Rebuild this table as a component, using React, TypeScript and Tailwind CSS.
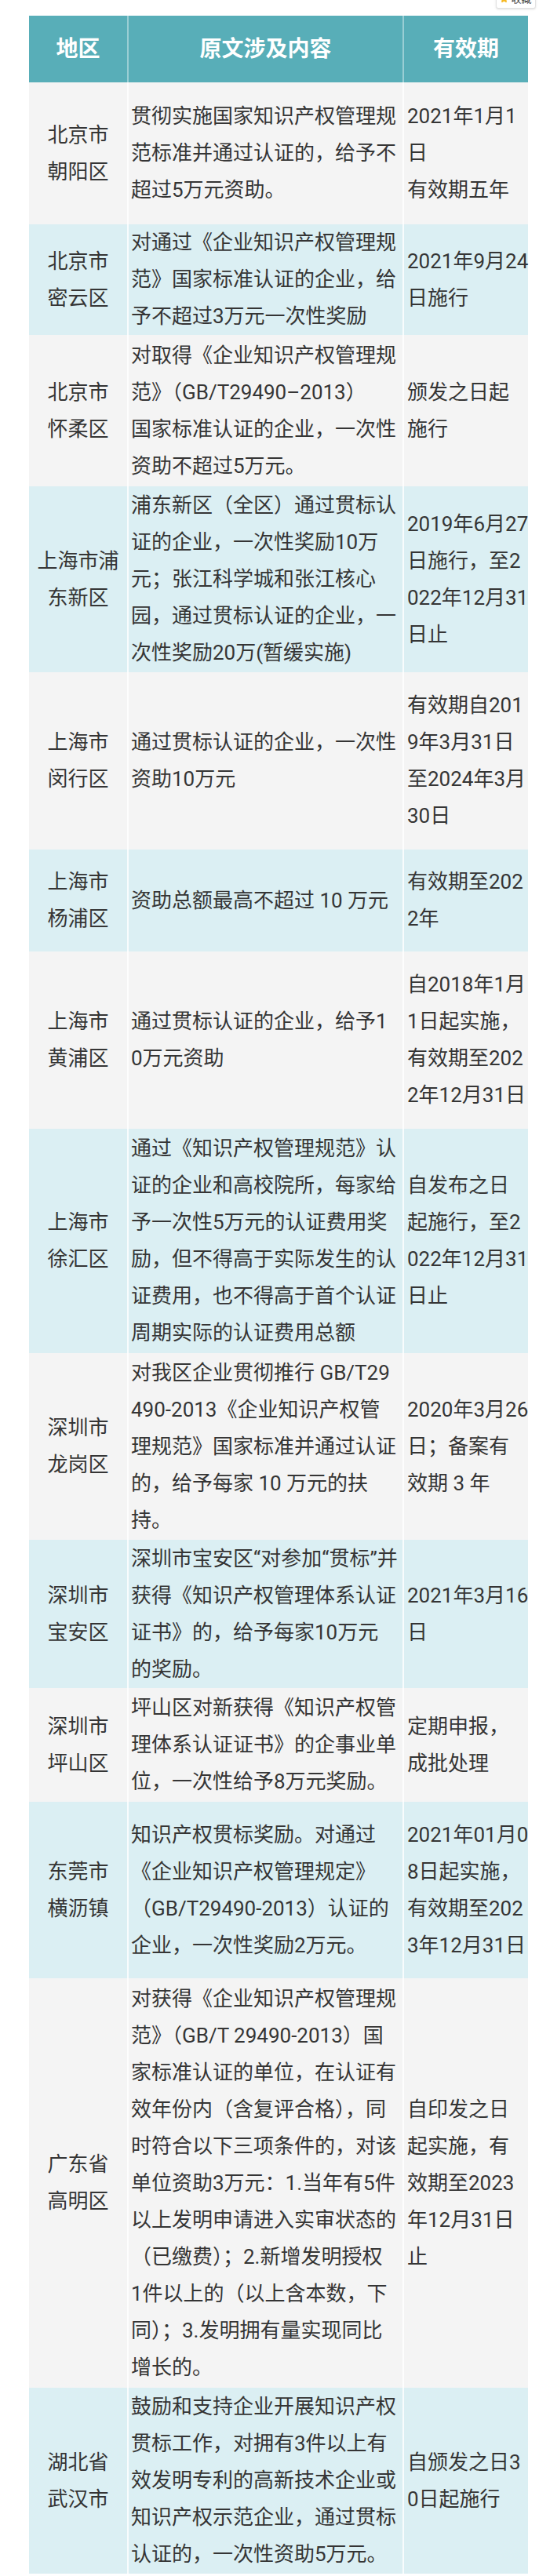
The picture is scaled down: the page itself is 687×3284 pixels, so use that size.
import { Star } from 'lucide-react';

type Row = { area: string[]; body: string[]; date: string[]; h: string };

const rows: Row[] = [
  {
    area: ['北京市', '朝阳区'],
    body: ['贯彻实施国家知识产权管理规', '范标准并通过认证的，给予不', '超过5万元资助。'],
    date: ['2021年1月1', '日', '有效期五年'],
    h: 'h-[181px]',
  },
  {
    area: ['北京市', '密云区'],
    body: ['对通过《企业知识产权管理规', '范》国家标准认证的企业，给', '予不超过3万元一次性奖励'],
    date: ['2021年9月24', '日施行'],
    h: 'h-[141px]',
  },
  {
    area: ['北京市', '怀柔区'],
    body: ['对取得《企业知识产权管理规', '范》（GB/T29490–2013）', '国家标准认证的企业，一次性', '资助不超过5万元。'],
    date: ['颁发之日起', '施行'],
    h: 'h-[193px]',
  },
  {
    area: ['上海市浦', '东新区'],
    body: [
      '浦东新区（全区）通过贯标认',
      '证的企业，一次性奖励10万',
      '元；张江科学城和张江核心',
      '园，通过贯标认证的企业，一',
      '次性奖励20万(暂缓实施)',
    ],
    date: ['2019年6月27', '日施行，至2', '022年12月31', '日止'],
    h: 'h-[237px]',
  },
  {
    area: ['上海市', '闵行区'],
    body: ['通过贯标认证的企业，一次性', '资助10万元'],
    date: ['有效期自201', '9年3月31日', '至2024年3月', '30日'],
    h: 'h-[226px]',
  },
  {
    area: ['上海市', '杨浦区'],
    body: ['资助总额最高不超过 10 万元'],
    date: ['有效期至202', '2年'],
    h: 'h-[130px]',
  },
  {
    area: ['上海市', '黄浦区'],
    body: ['通过贯标认证的企业，给予1', '0万元资助'],
    date: ['自2018年1月', '1日起实施，', '有效期至202', '2年12月31日'],
    h: 'h-[226px]',
  },
  {
    area: ['上海市', '徐汇区'],
    body: [
      '通过《知识产权管理规范》认',
      '证的企业和高校院所，每家给',
      '予一次性5万元的认证费用奖',
      '励，但不得高于实际发生的认',
      '证费用，也不得高于首个认证',
      '周期实际的认证费用总额',
    ],
    date: ['自发布之日', '起施行，至2', '022年12月31', '日止'],
    h: 'h-[286px]',
  },
  {
    area: ['深圳市', '龙岗区'],
    body: [
      '对我区企业贯彻推行 GB/T29',
      '490-2013《企业知识产权管',
      '理规范》国家标准并通过认证',
      '的，给予每家 10 万元的扶',
      '持。',
    ],
    date: ['2020年3月26', '日；备案有', '效期 3 年'],
    h: 'h-[238px]',
  },
  {
    area: ['深圳市', '宝安区'],
    body: ['深圳市宝安区“对参加“贯标”并', '获得《知识产权管理体系认证', '证书》的，给予每家10万元', '的奖励。'],
    date: ['2021年3月16', '日'],
    h: 'h-[189px]',
  },
  {
    area: ['深圳市', '坪山区'],
    body: ['坪山区对新获得《知识产权管', '理体系认证证书》的企事业单', '位，一次性给予8万元奖励。'],
    date: ['定期申报，', '成批处理'],
    h: 'h-[145px]',
  },
  {
    area: ['东莞市', '横沥镇'],
    body: ['知识产权贯标奖励。对通过', '《企业知识产权管理规定》', '（GB/T29490-2013）认证的', '企业，一次性奖励2万元。'],
    date: ['2021年01月0', '8日起实施，', '有效期至202', '3年12月31日'],
    h: 'h-[225px]',
  },
  {
    area: ['广东省', '高明区'],
    body: [
      '对获得《企业知识产权管理规',
      '范》（GB/T 29490-2013）国',
      '家标准认证的单位，在认证有',
      '效年份内（含复评合格），同',
      '时符合以下三项条件的，对该',
      '单位资助3万元：1.当年有5件',
      '以上发明申请进入实审状态的',
      '（已缴费）；2.新增发明授权',
      '1件以上的（以上含本数，下',
      '同）；3.发明拥有量实现同比',
      '增长的。',
    ],
    date: ['自印发之日', '起实施，有', '效期至2023', '年12月31日', '止'],
    h: 'h-[522px]',
  },
  {
    area: ['湖北省', '武汉市'],
    body: [
      '鼓励和支持企业开展知识产权',
      '贯标工作，对拥有3件以上有',
      '效发明专利的高新技术企业或',
      '知识产权示范企业，通过贯标',
      '认证的，一次性资助5万元。',
    ],
    date: ['自颁发之日3', '0日起施行'],
    h: 'h-[237px]',
  },
];

function Lines({ items }: { items: string[] }) {
  return (
    <>
      {items.map((t, i) => (
        <div key={i} className="whitespace-nowrap">
          {t}
        </div>
      ))}
    </>
  );
}

export default function App() {
  return (
    <div className="relative min-h-[3284px] overflow-hidden bg-white pt-5 pl-[37px] font-['Roboto','Noto_Sans_CJK_SC',sans-serif]">
      {/* floating favourite button, cut off at the top */}
      <button className="absolute right-[4px] top-[-14px] flex h-[25px] w-[51px] items-center justify-center gap-[3px] rounded-[3px] border border-[#e2e2e2] bg-white text-[13px] text-[#444] shadow-sm">
        <Star className="h-[11px] w-[11px] fill-[#f6b924] text-[#f6b924]" />
        收藏
      </button>

      <table className="w-[636px] table-fixed">
        <colgroup>
          <col className="w-[126px]" />
          <col className="w-[351px]" />
          <col className="w-[159px]" />
        </colgroup>
        <thead>
          <tr className="h-[85px] bg-[#58aeb8] text-[28px] font-bold text-white">
            <th className="border-r-2 border-white/40">地区</th>
            <th className="border-r-2 border-white/40">原文涉及内容</th>
            <th>有效期</th>
          </tr>
        </thead>
        <tbody className="text-[26px] leading-[47px] text-[#353535]">
          {rows.map((r, i) => (
            <tr key={i} className={`${r.h} ${i % 2 ? 'bg-[#dbeff3]' : 'bg-[#f4f4f4]'}`}>
              <td className="border-r-2 border-white/80 px-2 text-center">
                <Lines items={r.area} />
              </td>
              <td className="border-r-2 border-white/80 pl-[3px]">
                <Lines items={r.body} />
              </td>
              <td className="pl-[4px]">
                <Lines items={r.date} />
              </td>
            </tr>
          ))}
        </tbody>
      </table>
    </div>
  );
}
